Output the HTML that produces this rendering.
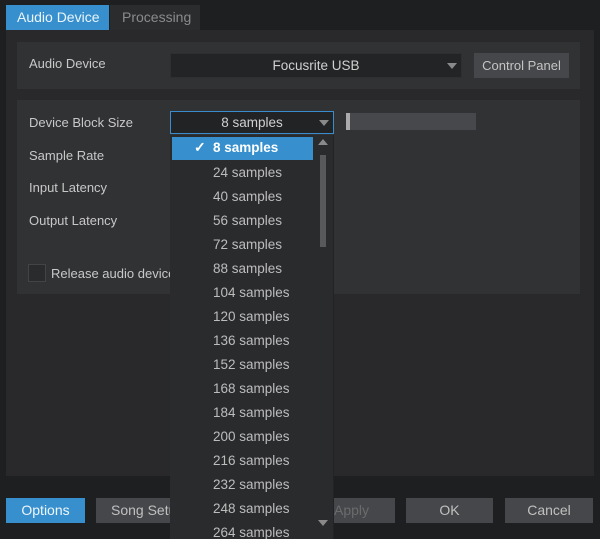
<!DOCTYPE html>
<html style="width:600px;height:539px;overflow:hidden"><head><style>
*{margin:0;padding:0;box-sizing:border-box}
body{width:600px;height:539px;background:#1e1f21;font-family:"Liberation Sans",sans-serif;font-size:13px;color:#c8c8c8;position:relative;overflow:hidden}
.a{position:absolute;white-space:nowrap}
.lbl{position:absolute;left:29px;font-size:13px;color:#c8c8c8;white-space:nowrap}
.btn{position:absolute;top:498px;height:25px;background:#46474a;color:#c0c0c0;text-align:center;line-height:25px;font-size:14px;white-space:nowrap;overflow:hidden}
.row{position:absolute;left:213px;font-size:13.5px;color:#bdbdbd;white-space:nowrap}
.tri{position:absolute;width:0;height:0;border-left:5px solid transparent;border-right:5px solid transparent;border-top:6px solid #8a8a8a}
</style></head><body>
<div class="a" style="left:6px;top:5px;width:103px;height:25px;background:#3790cd;color:#eaf4fb;font-size:14px;line-height:25px;padding-left:11px">Audio Device</div>
<div class="a" style="left:110px;top:5px;width:90px;height:25px;background:#2b2c2e;color:#8a8b8d;font-size:14px;line-height:25px;padding-left:12px">Processing</div>
<div class="a" style="left:6px;top:30px;width:588px;height:446px;background:#29292b"></div>
<div class="a" style="left:17px;top:42px;width:563px;height:47px;background:#313234"></div>
<div class="lbl" style="top:56px">Audio Device</div>
<div class="a" style="left:170px;top:53px;width:292px;height:25px;background:#232426;border:1px solid #2e2f31;text-align:center;line-height:24px;color:#d0d0d0;font-size:13.5px">Focusrite USB</div>
<div class="tri" style="left:447px;top:63px"></div>
<div class="a" style="left:474px;top:53px;width:95px;height:25px;background:#46474a;color:#c4c4c4;text-align:center;line-height:25px">Control Panel</div>
<div class="a" style="left:17px;top:100px;width:563px;height:194px;background:#313234"></div>
<div class="lbl" style="top:115px">Device Block Size</div>
<div class="lbl" style="top:148px">Sample Rate</div>
<div class="lbl" style="top:180px">Input Latency</div>
<div class="lbl" style="top:213px">Output Latency</div>
<div class="a" style="left:28px;top:264px;width:18px;height:18px;border:1px solid #444;background:#2a2b2d"></div>
<div class="lbl" style="left:51px;top:266px">Release audio device</div>
<div class="a" style="left:170px;top:111px;width:164px;height:23px;background:#222325;border:1px solid #3a8ccc;text-align:center;line-height:21px;color:#d0d0d0;font-size:13.5px">8 samples</div>
<div class="tri" style="left:319px;top:120px"></div>
<div class="a" style="left:346px;top:113px;width:130px;height:17px;background:#47484b"></div>
<div class="a" style="left:346px;top:113px;width:4px;height:17px;background:#aaa"></div>
<div class="a" style="left:170px;top:135px;width:164px;height:404px;background:#2a2b2d;border-right:1px solid #232325"></div>
<div class="a" style="left:172px;top:137px;width:141px;height:23px;background:#3790cd"></div>
<div class="a" style="left:194px;top:139px;color:#fff;font-size:14px;font-weight:bold">✓</div>
<div class="a" style="left:213px;top:140px;color:#fff;font-weight:bold;font-size:13.5px">8 samples</div>
<div class="a" style="left:318px;top:139px;width:0;height:0;border-left:5px solid transparent;border-right:5px solid transparent;border-bottom:6px solid #8a8a8a"></div>
<div class="a" style="left:320px;top:155px;width:6px;height:92px;background:#58595b"></div>
<div class="tri" style="left:318px;top:520px"></div>
<div class="row" style="top:165px">24 samples</div>
<div class="row" style="top:189px">40 samples</div>
<div class="row" style="top:213px">56 samples</div>
<div class="row" style="top:237px">72 samples</div>
<div class="row" style="top:261px">88 samples</div>
<div class="row" style="top:285px">104 samples</div>
<div class="row" style="top:309px">120 samples</div>
<div class="row" style="top:333px">136 samples</div>
<div class="row" style="top:357px">152 samples</div>
<div class="row" style="top:381px">168 samples</div>
<div class="row" style="top:405px">184 samples</div>
<div class="row" style="top:429px">200 samples</div>
<div class="row" style="top:453px">216 samples</div>
<div class="row" style="top:477px">232 samples</div>
<div class="row" style="top:501px">248 samples</div>
<div class="row" style="top:525px">264 samples</div>
<div class="btn" style="left:6px;width:79px;background:#3790cd;color:#eef6fc">Options</div>
<div class="btn" style="left:96px;width:74px;text-align:left;padding-left:15px">Song Setup</div>
<div class="btn" style="left:334px;width:61px;color:#6a6b6d;text-align:left">Apply</div>
<div class="btn" style="left:406px;width:87px">OK</div>
<div class="btn" style="left:505px;width:88px">Cancel</div>
</body></html>
